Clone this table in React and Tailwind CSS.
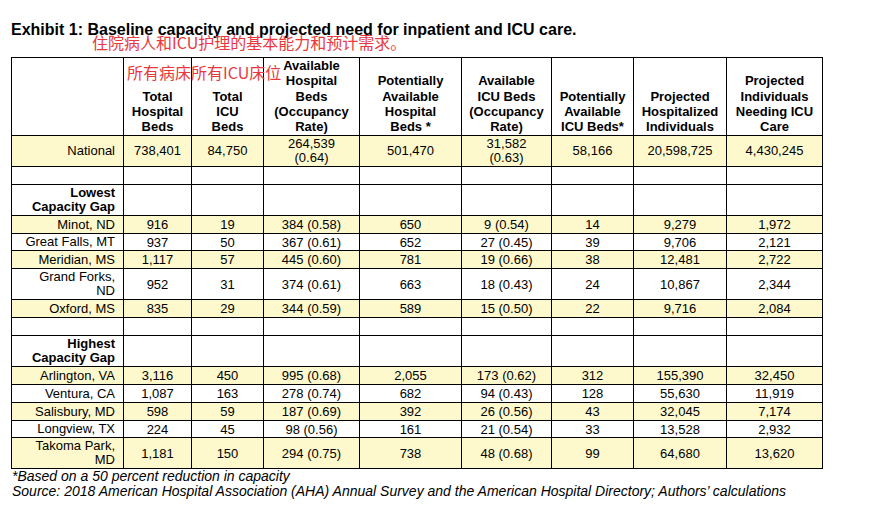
import React from "react";

const cols = [112, 68, 72, 96, 102, 90, 82, 93, 96];

const header = [
  [],
  ["Total", "Hospital", "Beds"],
  ["Total", "ICU", "Beds"],
  ["Available", "Hospital", "Beds", "(Occupancy", "Rate)"],
  ["Potentially", "Available", "Hospital", "Beds *"],
  ["Available", "ICU Beds", "(Occupancy", "Rate)"],
  ["Potentially", "Available", "ICU Beds*"],
  ["Projected", "Hospitalized", "Individuals"],
  ["Projected", "Individuals", "Needing ICU", "Care"],
];

const rows = [
  { label: ["National"], v: [["738,401"], ["84,750"], ["264,539", "(0.64)"], ["501,470"], ["31,582", "(0.63)"], ["58,166"], ["20,598,725"], ["4,430,245"]], y: true, h: "h-[31px]", tight: true },
  { label: [], v: [], y: false, h: "h-[18px]" },
  { label: ["Lowest", "Capacity Gap"], v: [], y: false, h: "h-[31px]", bold: true },
  { label: ["Minot, ND"], v: [["916"], ["19"], ["384 (0.58)"], ["650"], ["9 (0.54)"], ["14"], ["9,279"], ["1,972"]], y: true, h: "h-[18px]" },
  { label: ["Great Falls, MT"], v: [["937"], ["50"], ["367 (0.61)"], ["652"], ["27 (0.45)"], ["39"], ["9,706"], ["2,121"]], y: false, h: "h-[17px]" },
  { label: ["Meridian, MS"], v: [["1,117"], ["57"], ["445 (0.60)"], ["781"], ["19 (0.66)"], ["38"], ["12,481"], ["2,722"]], y: true, h: "h-[18px]" },
  { label: ["Grand Forks,", "ND"], v: [["952"], ["31"], ["374 (0.61)"], ["663"], ["18 (0.43)"], ["24"], ["10,867"], ["2,344"]], y: false, h: "h-[31px]" },
  { label: ["Oxford, MS"], v: [["835"], ["29"], ["344 (0.59)"], ["589"], ["15 (0.50)"], ["22"], ["9,716"], ["2,084"]], y: true, h: "h-[18px]" },
  { label: [], v: [], y: false, h: "h-[18px]" },
  { label: ["Highest", "Capacity Gap"], v: [], y: false, h: "h-[31px]", bold: true },
  { label: ["Arlington, VA"], v: [["3,116"], ["450"], ["995 (0.68)"], ["2,055"], ["173 (0.62)"], ["312"], ["155,390"], ["32,450"]], y: true, h: "h-[18px]" },
  { label: ["Ventura, CA"], v: [["1,087"], ["163"], ["278 (0.74)"], ["682"], ["94 (0.43)"], ["128"], ["55,630"], ["11,919"]], y: false, h: "h-[18px]" },
  { label: ["Salisbury, MD"], v: [["598"], ["59"], ["187 (0.69)"], ["392"], ["26 (0.56)"], ["43"], ["32,045"], ["7,174"]], y: true, h: "h-[18px]" },
  { label: ["Longview, TX"], v: [["224"], ["45"], ["98 (0.56)"], ["161"], ["21 (0.54)"], ["33"], ["13,528"], ["2,932"]], y: false, h: "h-[17px]" },
  { label: ["Takoma Park,", "MD"], v: [["1,181"], ["150"], ["294 (0.75)"], ["738"], ["48 (0.68)"], ["99"], ["64,680"], ["13,620"]], y: true, h: "h-[31px]" },
];

function Lines({ lines }) {
  return lines.map((l, i) => (
    <React.Fragment key={i}>
      {i > 0 && <br />}
      {l}
    </React.Fragment>
  ));
}

export default function App() {
  return (
    <div
      className="relative w-[882px] h-[524px] bg-white text-black overflow-hidden"
      style={{ fontFamily: '"Liberation Sans", Arial, sans-serif' }}
    >
      <div className="pt-[21px] pl-[11px]">
        <div className="text-[16px] leading-[18px] font-bold whitespace-nowrap">
          Exhibit 1: Baseline capacity and projected need for inpatient and ICU care.
        </div>
        <table className="mt-[18px] border-collapse table-fixed text-[13px] leading-[15px] w-[811px]">
          <colgroup>
            {cols.map((w, i) => (
              <col key={i} style={{ width: w }} />
            ))}
          </colgroup>
          <tbody>
            <tr className="h-[77px]">
              {header.map((h, i) => (
                <td
                  key={i}
                  className="border border-black align-bottom text-center font-bold p-0 pb-px leading-[15.25px]"
                >
                  <Lines lines={h} />
                </td>
              ))}
            </tr>
            {rows.map((r, ri) => (
              <tr key={ri} className={`${r.h} ${r.y ? "bg-[#fdf9cc]" : "bg-white"}`}>
                <td
                  className={`border border-black align-middle text-right p-0 pr-[8px] leading-[14.5px] ${
                    r.bold ? "font-bold" : ""
                  }`}
                >
                  <Lines lines={r.label} />
                </td>
                {Array.from({ length: 8 }).map((_, ci) => (
                  <td
                    key={ci}
                    className={`border border-black align-middle text-center p-0 ${
                      r.tight ? "leading-[14px]" : "leading-[15px]"
                    }`}
                  >
                    {r.v[ci] ? <Lines lines={r.v[ci]} /> : null}
                  </td>
                ))}
              </tr>
            ))}
          </tbody>
        </table>
        <div className="italic text-[14px] leading-[15px] whitespace-nowrap pl-px">
          <div>*Based on a 50 percent reduction in capacity</div>
          <div>
            Source: 2018 American Hospital Association (AHA) Annual Survey and the American Hospital Directory; Authors’ calculations
          </div>
        </div>
      </div>

      <div
        className="absolute left-[92px] top-[34px] text-[16px] leading-[16px] text-[#e8383d] whitespace-nowrap"
        style={{ fontFamily: '"Noto Sans CJK SC", sans-serif' }}
      >
        住院病人和ICU护理的基本能力和预计需求。
      </div>
      <div
        className="absolute left-[127px] top-[64px] text-[16px] leading-[16px] text-[#e8383d] whitespace-nowrap"
        style={{ fontFamily: '"Noto Sans CJK SC", sans-serif' }}
      >
        所有病床所有ICU床位
      </div>
    </div>
  );
}
